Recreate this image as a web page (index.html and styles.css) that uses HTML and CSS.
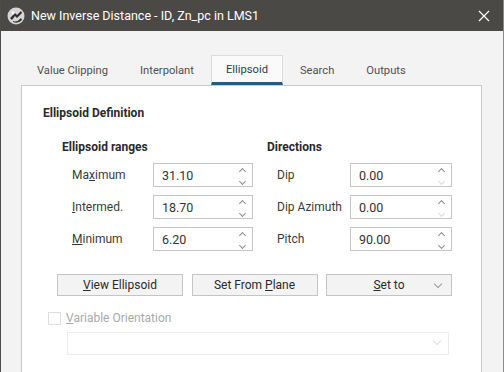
FILE: index.html
```html
<!DOCTYPE html>
<html lang="en">
<head>
  <meta charset="UTF-8">
  <title>New Inverse Distance</title>
  <link rel="stylesheet" href="styles.css">
</head>
<body>
  <div class="window">
    <div class="titlebar">
      <svg class="app-icon" width="18" height="18" viewBox="0 0 18 18">
        <circle cx="9" cy="9" r="8.5" fill="#d6d6d6"/>
        <path d="M3 11 L8 6 L10 8 L14 4 L15 6 L10 11 L8 9 L5 13 Z" fill="#2e2e2e"/>
        <path d="M6 14 Q10 16 14 11 L15 13 Q11 17 6 15 Z" fill="#2e2e2e"/>
        <circle cx="6" cy="6" r="1.5" fill="#fff"/>
      </svg>
      <span class="title">New Inverse Distance - ID, Zn_pc in LMS1</span>
      <svg class="close" width="12" height="12" viewBox="0 0 12 12">
        <path d="M1 1 L11 11 M11 1 L1 11" stroke="#fff" stroke-width="1.2"/>
      </svg>
    </div>

    <div class="content">
      <div class="tabs">
        <div class="tab">Value Clipping</div>
        <div class="tab">Interpolant</div>
        <div class="tab active">Ellipsoid</div>
        <div class="tab">Search</div>
        <div class="tab">Outputs</div>
      </div>

      <div class="panel">
        <div class="section-title">Ellipsoid Definition</div>

        <div class="groups">
          <div class="group ranges">
            <div class="group-title">Ellipsoid ranges</div>
            <div class="row">
              <label>Ma<u>x</u>imum</label>
              <div class="spin"><span>31.10</span><i class="arrows"><b class="up"></b><b class="down"></b></i></div>
            </div>
            <div class="row">
              <label><u>I</u>ntermed.</label>
              <div class="spin"><span>18.70</span><i class="arrows"><b class="up"></b><b class="down"></b></i></div>
            </div>
            <div class="row">
              <label><u>M</u>inimum</label>
              <div class="spin"><span>6.20</span><i class="arrows"><b class="up"></b><b class="down"></b></i></div>
            </div>
          </div>

          <div class="group directions">
            <div class="group-title">Directions</div>
            <div class="row">
              <label>Dip</label>
              <div class="spin"><span>0.00</span><i class="arrows"><b class="up"></b><b class="down off"></b></i></div>
            </div>
            <div class="row">
              <label>Dip Azimuth</label>
              <div class="spin"><span>0.00</span><i class="arrows"><b class="up"></b><b class="down off"></b></i></div>
            </div>
            <div class="row">
              <label>Pitch</label>
              <div class="spin"><span>90.00</span><i class="arrows"><b class="up"></b><b class="down"></b></i></div>
            </div>
          </div>
        </div>

        <div class="buttons">
          <button><u>V</u>iew Ellipsoid</button>
          <button>Set From <u>P</u>lane</button>
          <button class="dropdown"><span><u>S</u>et to</span><b class="chev"></b></button>
        </div>

        <div class="check disabled">
          <span class="box"></span>
          <span><u>V</u>ariable Orientation</span>
        </div>
        <div class="combo disabled"><b class="chev"></b></div>
      </div>
    </div>
  </div>
</body>
</html>
```

FILE: styles.css
```css
body {
  margin: 0;
  font-family: Roboto, "Liberation Sans", sans-serif;
  font-size: 12px;
  color: #333;
  background: #f3f3f3;
}

.window {
  height: 372px;
  border-left: 1px solid #4f4d4a;
  border-right: 1px solid #8a8a8a;
  box-sizing: border-box;
  overflow: hidden;
}

.titlebar {
  height: 31px;
  background: #4b4946;
  display: flex;
  align-items: center;
  padding: 0 13px 0 6px;
  color: #fff;
}

.app-icon {
  margin-right: 6px;
}

.title {
  font-family: Roboto, "Liberation Sans", sans-serif;
  font-size: 12.5px;
  flex: 1;
}

.content {
  padding: 24px 0 0 20px;
}

/* tabs */
.tabs {
  display: flex;
  gap: 2px;
  padding-left: 1px;
  height: 30px;
}

.tab {
  padding: 0 15px;
  line-height: 32px;
  color: #505050;
  font-size: 11.2px;
}

.tab.active {
  background: #fafafa;
  border: 1px solid #dcdcdc;
  border-bottom: 3px solid #255b7c;
  line-height: 28px;
  color: #2d3e4c;
  position: relative;
  z-index: 1;
  padding: 0 14px;
}

.panel {
  width: 461px;
  height: 300px;
  background: #fff;
  border: 1px solid #c9c9c9;
  padding: 19px 0 0 21px;
  box-sizing: border-box;
}

.section-title {
  font-weight: bold;
  line-height: 16px;
  color: #2a2a2a;
}

.groups {
  display: flex;
  margin-top: 18px;
  padding-left: 19px;
}

.group-title {
  font-weight: bold;
  line-height: 16px;
  margin-bottom: 8px;
  color: #2a2a2a;
}

.group.ranges {
  width: 205px;
}

.row {
  display: flex;
  align-items: center;
  height: 24px;
  margin-bottom: 8px;
  padding-left: 10px;
}

.ranges label {
  width: 81px;
}

.directions label {
  width: 73px;
}

label {
  color: #3a3a3a;
  font-size: 12px;
}

.spin {
  height: 24px;
  border: 1px solid #c6c6c6;
  box-sizing: border-box;
  display: flex;
  align-items: center;
  justify-content: space-between;
  padding: 0 3px 0 8px;
  font-size: 12.5px;
}

.ranges .spin {
  width: 100px;
}

.directions .spin {
  width: 102px;
}

.arrows {
  display: flex;
  flex-direction: column;
  gap: 5px;
  width: 8px;
  margin-right: 2px;
}

.arrows b {
  display: block;
  width: 4px;
  height: 4px;
  border-left: 1px solid #8c8c8c;
  border-top: 1px solid #8c8c8c;
  margin-left: 1px;
}

.arrows .up {
  transform: rotate(45deg);
  margin-top: 2px;
}

.arrows .down {
  transform: rotate(225deg);
}

.arrows .off {
  border-color: #dadada;
}

/* buttons */
.buttons {
  display: grid;
  grid-template-columns: 126px 126px 126px;
  column-gap: 8.5px;
  margin: 15px 0 0 14px;
}

button {
  height: 22px;
  background: #f3f3f3;
  border: 1px solid #c4c4c4;
  font-family: Roboto, "Liberation Sans", sans-serif;
  font-size: 12px;
  color: #2a2a2a;
  padding: 0;
}

.dropdown {
  position: relative;
}

.chev {
  position: absolute;
  right: 10px;
  top: 6px;
  width: 5px;
  height: 5px;
  border-right: 1px solid #9a9a9a;
  border-bottom: 1px solid #9a9a9a;
  transform: rotate(45deg);
}

.check {
  display: flex;
  align-items: center;
  margin: 15px 0 0 5px;
  color: #a9a9a9;
  font-size: 12px;
}

.check .box {
  width: 11px;
  height: 11px;
  border: 1px solid #dedede;
  margin-right: 5px;
}

.combo {
  position: relative;
  width: 382px;
  height: 23px;
  border: 1px solid #ebebeb;
  box-sizing: border-box;
  margin: 7px 0 0 24px;
}

.combo .chev {
  border-color: #dedede;
  right: 8px;
  top: 5px;
}
```
